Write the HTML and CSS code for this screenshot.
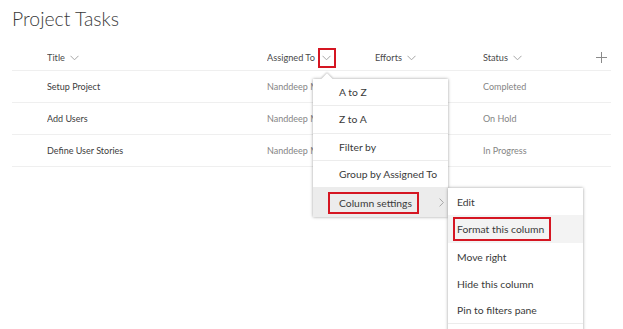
FILE: index.html
```html
<!DOCTYPE html>
<html>
<head>
<meta charset="utf-8">
<link rel="stylesheet" href="styles.css">
</head>
<body>
<div class="page">
  <h1 class="title">Project Tasks</h1>
  <div class="list">
    <div class="row head">
      <div class="cell spacer"></div>
      <div class="cell"><span>Title</span><svg class="chev" width="9" height="6" viewBox="0 0 9 6"><path d="M0.5 0.8 L4.5 4.8 L8.5 0.8" fill="none" stroke="#a6a6a6" stroke-width="1"/></svg></div>
      <div class="cell"><span>Assigned To</span><span class="redbtn"><svg width="9" height="6" viewBox="0 0 9 6"><path d="M0.5 0.8 L4.5 4.8 L8.5 0.8" fill="none" stroke="#a6a6a6" stroke-width="1"/></svg></span></div>
      <div class="cell"><span>Efforts</span><svg class="chev" width="9" height="6" viewBox="0 0 9 6"><path d="M0.5 0.8 L4.5 4.8 L8.5 0.8" fill="none" stroke="#a6a6a6" stroke-width="1"/></svg></div>
      <div class="cell"><span>Status</span><svg class="chev" width="9" height="6" viewBox="0 0 9 6"><path d="M0.5 0.8 L4.5 4.8 L8.5 0.8" fill="none" stroke="#a6a6a6" stroke-width="1"/></svg></div>
      <div class="cell plus"><svg width="11" height="11" viewBox="0 0 11 11"><path d="M5.5 0 V11 M0 5.5 H11" stroke="#8a8a8a" stroke-width="1"/></svg></div>
    </div>
    <div class="row">
      <div class="cell spacer"></div>
      <div class="cell main">Setup Project</div>
      <div class="cell sub">Nanddeep Mistry</div>
      <div class="cell sub"></div>
      <div class="cell sub">Completed</div>
      <div class="cell"></div>
    </div>
    <div class="row">
      <div class="cell spacer"></div>
      <div class="cell main">Add Users</div>
      <div class="cell sub">Nanddeep Mistry</div>
      <div class="cell sub"></div>
      <div class="cell sub">On Hold</div>
      <div class="cell"></div>
    </div>
    <div class="row">
      <div class="cell spacer"></div>
      <div class="cell main">Define User Stories</div>
      <div class="cell sub">Nanddeep Mistry</div>
      <div class="cell sub"></div>
      <div class="cell sub">In Progress</div>
      <div class="cell"></div>
    </div>
  </div>

  <div class="menu menu-main">
    <div class="beak"></div>
    <div class="item sep">A to Z</div>
    <div class="item sep">Z to A</div>
    <div class="item sep">Filter by</div>
    <div class="item sep">Group by Assigned To</div>
    <div class="item active boxed"><span class="redbox">Column settings</span><svg class="arrow" width="5" height="9" viewBox="0 0 5 9"><path d="M0.6 0.6 L4.4 4.5 L0.6 8.4" fill="none" stroke="#a6a6a6" stroke-width="1"/></svg></div>
  </div>

  <div class="menu menu-sub">
    <div class="item">Edit</div>
    <div class="item active boxed"><span class="redbox">Format this column</span></div>
    <div class="item">Move right</div>
    <div class="item">Hide this column</div>
    <div class="item sep">Pin to filters pane</div>
    <div class="item"></div>
  </div>
</div>
</body>
</html>
```

FILE: styles.css
```css
html, body {
  margin: 0;
  padding: 0;
  background: #ffffff;
}
body {
  font-family: Lato, "Open Sans", sans-serif;
  color: #333333;
  width: 623px;
  height: 329px;
  overflow: hidden;
}
.page {
  position: relative;
  padding: 0 12px;
  height: 329px;
}
.title {
  margin: 0;
  padding-top: 7px;
  height: 46px;
  box-sizing: border-box;
  font-size: 19.4px;
  line-height: 23px;
  font-weight: 300;
  color: #3a3a3a;
}
.list {
  width: 599px;
}
.row {
  display: grid;
  grid-template-columns: 35px 220px 108px 108px 1fr 24px;
  height: 32px;
  box-sizing: border-box;
  border-bottom: 1px solid #efefef;
  align-items: center;
  font-size: 9px;
}
.row.head {
  height: 25px;
  font-size: 9.2px;
  color: #4a4a4a;
  padding-bottom: 1px;
}
.cell {
  display: flex;
  align-items: center;
  white-space: nowrap;
  overflow: hidden;
}
.cell .chev {
  margin-left: 5px;
}
.main {
  color: #404040;
}
.sub {
  color: #858585;
}
.redbtn {
  display: inline-flex;
  align-items: center;
  justify-content: center;
  width: 14px;
  height: 16px;
  border: 2px solid #d51622;
  margin-left: 3px;
}
.plus {
  padding-left: 9px;
}
.menu {
  position: absolute;
  background: #ffffff;
  box-shadow: 0 0 3px rgba(0, 0, 0, 0.38);
  font-size: 10.35px;
  color: #3a3a3a;
}
.menu-main {
  left: 313px;
  top: 79px;
  width: 135px;
}
.beak {
  position: absolute;
  left: 10px;
  top: -4px;
  width: 8px;
  height: 8px;
  background: #ffffff;
  transform: rotate(45deg);
  box-shadow: -1px -1px 2px rgba(0, 0, 0, 0.2);
}
.menu-main .item {
  position: relative;
  height: 27px;
  display: flex;
  align-items: center;
  padding-left: 26px;
  box-sizing: border-box;
  background: #ffffff;
}
.menu-main .item.sep {
  border-bottom: 1px solid #ececec;
  height: 27.25px;
}
.menu-main .item.boxed {
  padding-left: 15px;
  height: 29px;
}
.menu .item.active {
  background: #ececec;
}
.redbox {
  border: 2px solid #d51622;
  padding: 0 5px 0 9px;
  height: 22px;
  box-sizing: border-box;
  display: flex;
  align-items: center;
}
.arrow {
  position: absolute;
  left: 126px;
  top: 10px;
}
.menu-sub {
  left: 448px;
  top: 188px;
  width: 135px;
  height: 150px;
}
.menu-sub .item {
  height: 27px;
  display: flex;
  align-items: center;
  padding-left: 9px;
  box-sizing: border-box;
}
.menu-sub .item.sep {
  border-bottom: 1px solid #ececec;
  height: 27px;
}
.menu-sub .item.active {
  background: #f3f3f3;
  padding-left: 5px;
  height: 28px;
}
.menu-sub .redbox {
  padding: 0 5px 0 2px;
  height: 24px;
}
```
